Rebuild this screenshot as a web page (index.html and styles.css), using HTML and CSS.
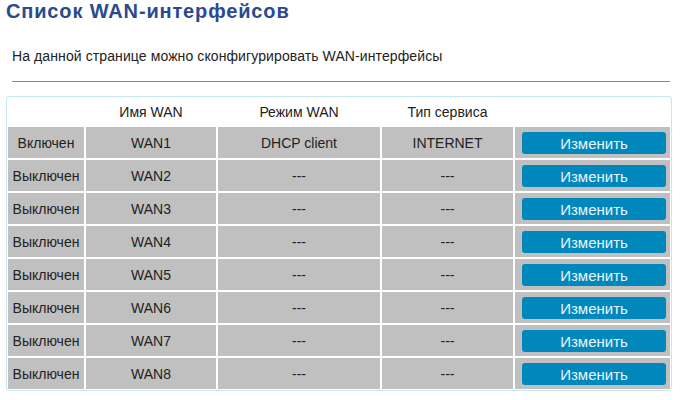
FILE: index.html
```html
<!DOCTYPE html>
<html lang="ru">
<head>
    <meta charset="UTF-8">
    <title>Список WAN-интерфейсов</title>
    <link rel="stylesheet" href="styles.css">
</head>
<body>
    <h1 class="page-title">Список WAN-интерфейсов</h1>
    <p class="page-desc">На данной странице можно сконфигурировать WAN-интерфейсы</p>
    <hr class="divider">

    <div class="wan-box">
        <table class="wan-table">
            <colgroup>
                <col class="c-state">
                <col class="c-name">
                <col class="c-mode">
                <col class="c-service">
                <col class="c-action">
            </colgroup>
            <thead>
                <tr>
                    <th></th>
                    <th>Имя WAN</th>
                    <th>Режим WAN</th>
                    <th>Тип сервиса</th>
                    <th></th>
                </tr>
            </thead>
            <tbody>
                <tr>
                    <td>Включен</td>
                    <td>WAN1</td>
                    <td>DHCP client</td>
                    <td>INTERNET</td>
                    <td class="act"><button class="edit-btn">Изменить</button></td>
                </tr>
                <tr>
                    <td>Выключен</td>
                    <td>WAN2</td>
                    <td>---</td>
                    <td>---</td>
                    <td class="act"><button class="edit-btn">Изменить</button></td>
                </tr>
                <tr>
                    <td>Выключен</td>
                    <td>WAN3</td>
                    <td>---</td>
                    <td>---</td>
                    <td class="act"><button class="edit-btn">Изменить</button></td>
                </tr>
                <tr>
                    <td>Выключен</td>
                    <td>WAN4</td>
                    <td>---</td>
                    <td>---</td>
                    <td class="act"><button class="edit-btn">Изменить</button></td>
                </tr>
                <tr>
                    <td>Выключен</td>
                    <td>WAN5</td>
                    <td>---</td>
                    <td>---</td>
                    <td class="act"><button class="edit-btn">Изменить</button></td>
                </tr>
                <tr>
                    <td>Выключен</td>
                    <td>WAN6</td>
                    <td>---</td>
                    <td>---</td>
                    <td class="act"><button class="edit-btn">Изменить</button></td>
                </tr>
                <tr>
                    <td>Выключен</td>
                    <td>WAN7</td>
                    <td>---</td>
                    <td>---</td>
                    <td class="act"><button class="edit-btn">Изменить</button></td>
                </tr>
                <tr>
                    <td>Выключен</td>
                    <td>WAN8</td>
                    <td>---</td>
                    <td>---</td>
                    <td class="act"><button class="edit-btn">Изменить</button></td>
                </tr>
            </tbody>
        </table>
    </div>
</body>
</html>
```

FILE: styles.css
```css
body {
    margin: 0;
    padding: 0;
    font-family: 'Liberation Sans', Arial, sans-serif;
    color: #222;
    background: #fff;
}
.page-title {
    margin: 0 0 0 6px;
    font-size: 20px;
    line-height: 22px;
    font-weight: bold;
    letter-spacing: 0.85px;
    color: #2b4a8e;
}
.page-desc {
    margin: 26px 0 0 12px;
    font-size: 14px;
    line-height: 16px;
    letter-spacing: 0.1px;
}
.divider {
    margin: 17px 10px 0 12px;
    border: 0;
    border-top: 1px solid #888;
    height: 0;
}
.wan-box {
    margin: 14px 0 0 6px;
    width: 664px;
    border: 1px solid #c6e6f3;
    border-radius: 3px;
}
.wan-table {
    margin: -1px;
    width: 666px;
    table-layout: fixed;
    border-spacing: 2px;
    font-size: 14px;
}
.c-state { width: 76px; }
.c-name { width: 130px; }
.c-mode { width: 162px; }
.c-service { width: 131px; }
.c-action { width: 155px; }
.wan-table th {
    height: 27px;
    padding: 0;
    font-weight: normal;
    text-align: center;
    vertical-align: middle;
}
.wan-table td {
    height: 31px;
    padding: 0;
    background: #c0c0c0;
    text-align: center;
    vertical-align: middle;
}
.wan-table td.act {
    text-align: left;
}
.edit-btn {
    display: block;
    margin: 1px 0 0 7px;
    width: 144px;
    height: 22px;
    padding: 0;
    border: 0;
    border-radius: 3px;
    background: #0088bd;
    color: #eaf6fb;
    font-family: 'Liberation Sans', Arial, sans-serif;
    font-size: 15px;
    cursor: pointer;
}
```
